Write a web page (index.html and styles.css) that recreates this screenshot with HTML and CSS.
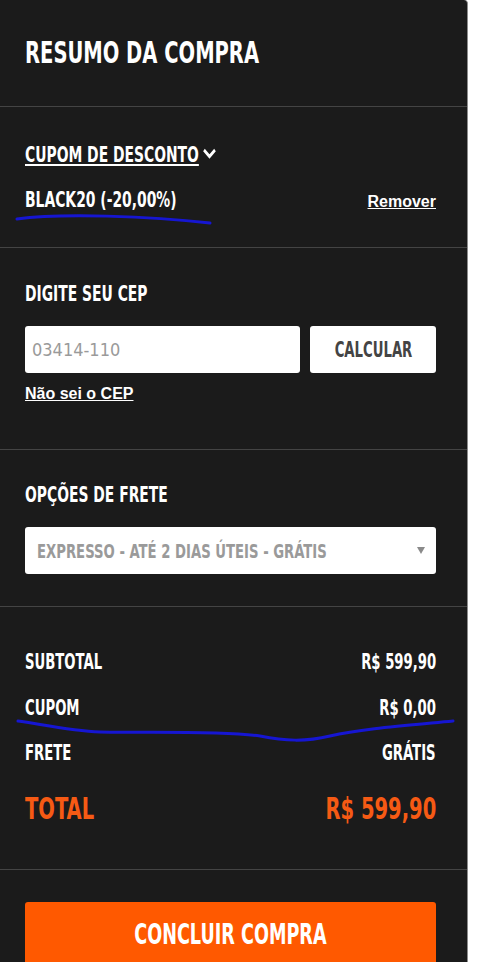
FILE: index.html
```html
<!DOCTYPE html>
<html lang="pt-BR">
<head>
    <meta charset="UTF-8">
    <meta name="viewport" content="width=device-width, initial-scale=1.0">
    <title>Resumo da compra</title>
    <link rel="stylesheet" href="styles.css">
</head>
<body>
    <div class="summary">
        <section class="block block-title">
            <h2 class="title"><span class="narrow">RESUMO DA COMPRA</span></h2>
        </section>

        <section class="block block-coupon">
            <a href="#" class="coupon-toggle label narrow wide"><span class="underline">CUPOM DE DESCONTO</span><svg class="chevron" width="20" height="11" viewBox="0 0 20 11">
                    <path d="M2.5 2 L10 8.5 L17.5 2" fill="none" stroke="#fff" stroke-width="3.4"/>
                </svg></a>
            <div class="coupon-row">
                <span class="label narrow wide">BLACK20 (-20,00%)</span>
                <a href="#" class="link">Remover</a>
            </div>
        </section>

        <section class="block block-cep">
            <div class="label"><span class="narrow wide">DIGITE SEU CEP</span></div>
            <div class="cep-form">
                <input type="text" class="cep-input" placeholder="03414-110">
                <button class="cep-button"><span class="narrow narrow-center">CALCULAR</span></button>
            </div>
            <a href="#" class="link cep-link">Não sei o CEP</a>
        </section>

        <section class="block block-shipping">
            <div class="label"><span class="narrow wide">OPÇÕES DE FRETE</span></div>
            <div class="select">
                <span class="narrow wide select-text">EXPRESSO - ATÉ 2 DIAS ÚTEIS - GRÁTIS</span>
                <i class="caret"></i>
            </div>
        </section>

        <section class="block block-totals">
            <div class="total-row row-subtotal">
                <span class="narrow">SUBTOTAL</span>
                <span class="narrow narrow-right">R$ 599,90</span>
            </div>
            <div class="total-row row-coupon">
                <span class="narrow">CUPOM</span>
                <span class="narrow narrow-right">R$ 0,00</span>
            </div>
            <div class="total-row row-freight">
                <span class="narrow">FRETE</span>
                <span class="narrow narrow-right">GRÁTIS</span>
            </div>
            <div class="total-row row-total">
                <span class="narrow">TOTAL</span>
                <span class="narrow narrow-right">R$ 599,90</span>
            </div>
        </section>

        <section class="block block-finish">
            <button class="finish-button"><span class="narrow narrow-center">CONCLUIR COMPRA</span></button>
        </section>
    </div>

    <svg class="marks" width="500" height="962" viewBox="0 0 500 962">
        <path d="M17 219 C 60 213, 150 216, 210 223" />
        <path d="M18 721 C 40 724, 70 731, 100 732 C 160 733, 220 731, 260 736 C 285 741, 305 742, 330 736 C 360 729, 400 726, 453 721" />
    </svg>
</body>
</html>
```

FILE: styles.css
```css
body {
    margin: 0;
    background-color: #fff;
    font-family: "DejaVu Sans Condensed", "DejaVu Sans", sans-serif;
    height: 962px;
    overflow: hidden;
    position: relative;
}

/* the shop font is a tall condensed face, squeeze the text to match */
.narrow {
    display: inline-block;
    transform: scaleX(0.7);
    transform-origin: left center;
    white-space: nowrap;
}

.narrow.wide {
    transform: scaleX(0.735);
}

.narrow-right {
    transform-origin: right center;
}

.narrow-center {
    transform-origin: center center;
}

.summary {
    box-sizing: border-box;
    width: 468px;
    min-height: 962px;
    background-color: #1b1b1b;
    border-right: 1px solid #8c8c8c;
    border-top-right-radius: 4px;
    color: #fff;
}

.block {
    padding: 0 31px 0 25px;
    border-bottom: 1px solid #444;
}

.block:last-child {
    border-bottom: none;
}

.title {
    margin: 0;
    font-size: 31px;
    line-height: 31px;
    font-weight: bold;
}

.block-title {
    padding-top: 37px;
    padding-bottom: 38px;
}

.label {
    font-size: 21px;
    line-height: 21px;
    font-weight: bold;
}

.underline {
    text-decoration: underline;
    text-decoration-thickness: 2px;
    text-underline-offset: 2px;
}

.link {
    font-family: "Liberation Sans", Arial, sans-serif;
    font-size: 16px;
    line-height: 18px;
    font-weight: bold;
    color: #fff;
    text-decoration: underline;
}

/* cupom */
.block-coupon {
    padding-top: 38px;
    padding-bottom: 36px;
}

.coupon-toggle {
    color: #fff;
    text-decoration: none;
}

.chevron {
    margin-left: 4px;
    vertical-align: 3px;
}

.coupon-row {
    display: flex;
    justify-content: space-between;
    align-items: baseline;
    margin-top: 24px;
}

/* cep */
.block-cep {
    padding-top: 36px;
    padding-bottom: 46px;
}

.cep-form {
    display: flex;
    gap: 10px;
    margin-top: 21px;
}

.cep-input {
    box-sizing: border-box;
    width: 275px;
    height: 47px;
    border: none;
    border-radius: 3px;
    padding: 0 7px;
    font-family: inherit;
    font-size: 18px;
    color: #333;
    outline: none;
}

.cep-input::placeholder {
    color: #9a9a9a;
}

.cep-button {
    flex: 1;
    height: 47px;
    border: none;
    border-radius: 3px;
    background-color: #fff;
    font-family: inherit;
    font-size: 21px;
    font-weight: bold;
    color: #444;
    cursor: pointer;
}

.cep-link {
    display: inline-block;
    margin-top: 12px;
}

/* frete */
.block-shipping {
    padding-top: 35px;
    padding-bottom: 32px;
}

.select {
    display: flex;
    align-items: center;
    height: 47px;
    margin-top: 21px;
    padding: 0 11px 0 12px;
    background-color: #fff;
    border-radius: 3px;
    font-size: 20px;
    font-weight: bold;
    color: #9a9a9a;
}

.select-text {
    flex: 1;
    min-width: 0;
}

.caret {
    width: 0;
    height: 0;
    border-left: 4px solid transparent;
    border-right: 4px solid transparent;
    border-top: 7px solid #8a8a8a;
}

/* totais */
.block-totals {
    padding-top: 45px;
    padding-bottom: 45px;
}

.total-row {
    display: flex;
    justify-content: space-between;
    font-size: 21px;
    line-height: 21px;
    font-weight: bold;
}

.row-coupon {
    margin-top: 25px;
}

.row-freight {
    margin-top: 24px;
}

.row-total {
    margin-top: 29px;
    font-size: 31px;
    line-height: 31px;
    color: #f65a14;
}

/* concluir */
.block-finish {
    padding-top: 32px;
}

.finish-button {
    width: 100%;
    height: 64px;
    border: none;
    border-radius: 3px;
    background-color: #ff5900;
    font-family: inherit;
    font-size: 28px;
    font-weight: bold;
    color: #fff;
    cursor: pointer;
}

.marks {
    position: absolute;
    top: 0;
    left: 0;
    pointer-events: none;
}

.marks path {
    fill: none;
    stroke: #1616d2;
    stroke-width: 3;
    stroke-linecap: round;
}
```
